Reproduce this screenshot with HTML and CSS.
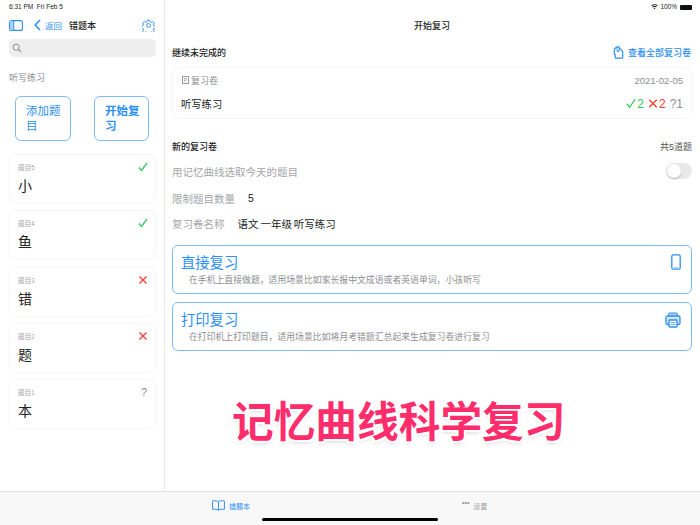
FILE: index.html
```html
<!DOCTYPE html>
<html lang="zh">
<head>
<meta charset="utf-8">
<title>错题本</title>
<link rel="stylesheet" href="styles.css">
</head>
<body>
<div class="app">
  <div class="panes">
    <aside class="sidebar">
      <div class="status status-left">6:31 PM&nbsp;&nbsp;Fri Feb 5</div>
      <div class="sidenav">
        <svg class="ic-side" viewBox="0 0 14 11"><rect x=".6" y=".6" width="12.8" height="9.8" rx="2" fill="none" stroke="#2c90f5" stroke-width="1.1"/><rect x="1" y="1" width="3.6" height="9" fill="#a9d2fb"/><path d="M4.8.8v9.4" stroke="#2c90f5" stroke-width="1"/></svg>
        <svg class="ic-back" viewBox="0 0 7 12"><path d="M6 1 1.2 6 6 11" fill="none" stroke="#2c90f5" stroke-width="1.6"/></svg>
        <span class="back">返回</span>
        <span class="sidetitle">错题本</span>
        <svg class="ic-gear" viewBox="0 0 24 24"><path d="M10 2h4l.7 3 2.5 1.1 2.7-1.6 2.7 2.9-1.7 2.6.9 2.5 3 .7v3.800l-3 .7-.9 2.4 1.600 2.700-2.800 2.700-2.600-1.600-2.500 1-.7 3h-4l-.7-3-2.400-1-2.700 1.600-2.800-2.800 1.600-2.600-1-2.400-3-.8v-3.800l3-.7 1-2.500-1.600-2.700 2.800-2.700 2.600 1.600 2.500-1z" fill="none" stroke="#2c90f5" stroke-width="1.7" stroke-linejoin="round"/><circle cx="12" cy="12" r="3.6" fill="none" stroke="#2c90f5" stroke-width="1.7"/></svg>
      </div>
      <div class="search">
        <svg class="ic-search" viewBox="0 0 12 12"><circle cx="5" cy="5" r="3.7" fill="none" stroke="#8e8e93" stroke-width="1.2"/><path d="m7.8 7.8 3.2 3.2" stroke="#8e8e93" stroke-width="1.3"/></svg>
      </div>
      <div class="side-section">听写练习</div>
      <div class="actions">
        <div class="action">添加题目</div>
        <div class="action action-strong">开始复习</div>
      </div>
      <div class="qcard"><div class="qhead"><span>题目5</span><svg class="mark" viewBox="0 0 10 10"><path d="m1 5.500 2.500 3L9 1" fill="none" stroke="#34c759" stroke-width="1.300"/></svg></div><div class="qword">小</div></div>
      <div class="qcard"><div class="qhead"><span>题目4</span><svg class="mark" viewBox="0 0 10 10"><path d="m1 5.500 2.500 3L9 1" fill="none" stroke="#34c759" stroke-width="1.300"/></svg></div><div class="qword">鱼</div></div>
      <div class="qcard"><div class="qhead"><span>题目3</span><svg class="mark" viewBox="0 0 10 10"><path d="m1.500 1.500 7 7m0-7-7 7" fill="none" stroke="#ff3b30" stroke-width="1.300"/></svg></div><div class="qword">错</div></div>
      <div class="qcard"><div class="qhead"><span>题目2</span><svg class="mark" viewBox="0 0 10 10"><path d="m1.500 1.500 7 7m0-7-7 7" fill="none" stroke="#ff3b30" stroke-width="1.300"/></svg></div><div class="qword">题</div></div>
      <div class="qcard"><div class="qhead"><span>题目1</span><span class="qmark">?</span></div><div class="qword">本</div></div>
    </aside>
    <main class="detail">
      <div class="status status-right">
        <svg class="ic-wifi" viewBox="0 0 12 9"><path d="M6 8.500 4.400 6.700a2.300 2.300 0 0 1 3.200 0zM3.300 5.500 2.200 4.300a5.400 5.400 0 0 1 7.600 0L8.700 5.500a3.900 3.900 0 0 0-5.400 0zM1.300 3.400.3 2.300a8 8 0 0 1 11.400 0l-1 1.100a6.600 6.600 0 0 0-9.400 0z" fill="#111"/></svg>
        <span>100%</span>
        <span class="battery"></span>
      </div>
      <div class="title">开始复习</div>
      <div class="head-row">
        <span class="h2">继续未完成的</span>
        <span class="all">
          <svg class="ic-docs" viewBox="0 0 11 14"><path d="M3.500 1h2.200l1 1.200V3h.6l2.700 3v6a1 1 0 0 1-1 1H3a1 1 0 0 1-1-1V9.500L1 9V3.500z" fill="none" stroke="#2c90f5" stroke-width="1.300" stroke-linejoin="round"/><path d="M4 1v5l1-.6 1 .6V3" fill="none" stroke="#2c90f5"/></svg>
          查看全部复习卷
        </span>
      </div>
      <section class="paper">
        <div class="paper-top">
          <span class="paper-type"><span class="ic-paper">P</span>复习卷</span>
          <span class="date">2021-02-05</span>
        </div>
        <div class="paper-bottom">
          <span class="paper-name">听写练习</span>
          <span class="tally">
            <svg class="ic-tally" viewBox="0 0 12 12"><path d="m1 6.500 3.200 4L11 1" fill="none" stroke="#34c759" stroke-width="1.500"/></svg><b class="good">2</b>
            <svg class="ic-tally gap" viewBox="0 0 12 12"><path d="m1.500 1.500 9 9m0-9-9 9" fill="none" stroke="#ff3b30" stroke-width="1.600"/></svg><b class="bad">2</b>
            <b class="unk gap">?</b><b class="unk">1</b>
          </span>
        </div>
      </section>
      <div class="head-row head-new">
        <span class="h2">新的复习卷</span>
        <span class="count">共5道题</span>
      </div>
      <div class="opt opt-switch">
        <span class="label">用记忆曲线选取今天的题目</span>
        <span class="switch"><span class="knob"></span></span>
      </div>
      <div class="opt opt-limit"><span class="label">限制题目数量</span><span class="value num">5</span></div>
      <div class="opt opt-name"><span class="label">复习卷名称</span><span class="value name">语文 一年级 听写练习</span></div>
      <section class="mode">
        <div class="mode-text">
          <div class="mode-title">直接复习</div>
          <div class="mode-desc">在手机上直接做题，适用场景比如家长报中文成语或者英语单词，小孩听写</div>
        </div>
        <svg class="ic-phone" viewBox="0 0 10 16"><rect x=".8" y=".8" width="8.400" height="14.400" rx="1.500" fill="none" stroke="#2c90f5" stroke-width="1.300"/><path d="M3 13.500h4" stroke="#a9d2fb"/></svg>
      </section>
      <section class="mode mode-print">
        <div class="mode-text">
          <div class="mode-title">打印复习</div>
          <div class="mode-desc">在打印机上打印题目，适用场景比如将月考错题汇总起来生成复习卷进行复习</div>
        </div>
        <svg class="ic-printer" viewBox="0 0 16 16"><path d="M3.500 4V2.200C3.500 1.500 4 1 4.700 1h6.600c.7 0 1.200.5 1.200 1.200V4" fill="#a9d2fb" stroke="#2c90f5"/><path d="M4 12.500H2.500A1.500 1.500 0 0 1 1 11V5.500C1 4.700 1.700 4 2.500 4h11c.8 0 1.500.7 1.500 1.500V11a1.500 1.500 0 0 1-1.500 1.500H12" fill="#cfe6fd" stroke="#2c90f5" stroke-width="1.300"/><rect x="4" y="8" width="8" height="7" rx=".8" fill="#fff" stroke="#2c90f5" stroke-width="1.300"/><path d="M5.500 10.500h5M5.500 12.500h5" stroke="#6bb0f8"/></svg>
      </section>
    </main>
  </div>
  <nav class="tabbar">
    <div class="tab tab-active">
      <svg class="ic-book" viewBox="0 0 13 11"><path d="M6.500 1.800C5.500.9 3.500.6 1 .8A.4.4 0 0 0 .6 1.200v8.100c2.500-.3 4.700 0 5.900.9 1.200-.9 3.400-1.200 5.900-.9V1.200a.4.4 0 0 0-.4-.4c-2.500-.2-4.500.1-5.500 1zM6.500 1.800v8.400" fill="none" stroke="#2c90f5" stroke-width="1"/></svg>
      <span>错题本</span>
    </div>
    <div class="tab tab-more">
      <span class="dots">•••</span>
      <span>设置</span>
    </div>
  </nav>
  <div class="home-bar"></div>
  <div class="promo">记忆曲线科学复习</div>
</div>
</body>
</html>
```
FILE: styles.css
```css
* { box-sizing: border-box; }
html, body { margin: 0; padding: 0; }
body {
  width: 700px;
  height: 525px;
  overflow: hidden;
  background: #fff;
  color: #111;
  font-family: "Liberation Sans", "Noto Sans CJK SC", sans-serif;
}
svg { display: block; flex: none; }
.app { position: relative; width: 700px; height: 525px; display: flex; flex-direction: column; }
.panes { flex: 1; display: flex; min-height: 0; }

.sidebar { width: 165px; flex: none; border-right: 1px solid #e8e8ea; padding: 0 8px 0 9px; overflow: hidden; }
.status { font-size: 6.500px; line-height: 8px; height: 8px; }
.status-left { margin-top: 3px; color: #222; }
.sidenav { display: flex; align-items: center; height: 20px; margin-top: 4px; }
.ic-side { width: 14px; height: 11px; margin-right: 11px; }
.ic-back { width: 7px; height: 12px; margin-right: 4px; }
.back { font-size: 8.500px; color: #2c90f5; width: 20px; }
.sidetitle { font-size: 9px; font-weight: 500; margin-left: 4px; flex: 1; color: #222; }
.ic-gear { width: 13px; height: 13px; margin-right: 1px; }
.search { height: 18px; margin-top: 4px; background: #eeeeef; border-radius: 5px; display: flex; align-items: center; padding-left: 3px; }
.ic-search { width: 10px; height: 10px; }
.side-section { font-size: 9px; line-height: 12px; color: #8e8e93; margin-top: 15px; }
.actions { display: flex; justify-content: space-between; margin: 12px 7px 13px 6px; }
.action {
  width: 56px; height: 45px; padding: 7px 8px 0 10px;
  border: 1px solid #7dbafa; border-radius: 6px;
  font-size: 11.500px; line-height: 15px; color: #2c90f5;
}
.action-strong { font-weight: 700; width: 55px; }
.qcard {
  height: 50px; margin-bottom: 6.250px; padding: 7px 8px 0 8px;
  border: 1px solid #f6f6f7; border-radius: 6px;
}
.qhead { display: flex; justify-content: space-between; align-items: center; height: 10px; font-size: 6.500px; color: #a5a5a9; }
.mark { width: 10px; height: 10px; margin-right: -1px; }
.qmark { font-size: 11px; line-height: 10px; color: #8e8e93; }
.good { color: #34c759; }
.bad { color: #ff3b30; }
.unk { color: #8e8e93; }
.qword { font-size: 14px; line-height: 18px; margin-top: 5px; color: #222; }

.detail { flex: 1; min-width: 0; padding: 0 8px 0 7px; position: relative; }
.status-right { display: flex; justify-content: flex-end; align-items: center; gap: 2px; margin-top: 3px; font-size: 6.500px; color: #222; }
.ic-wifi { width: 7px; height: 6px; }
.battery { width: 12px; height: 5px; background: #111; border-radius: 1px; margin-left: 1px; }
.title { text-align: center; font-size: 9px; line-height: 12px; margin-top: 9px; color: #222; font-weight: 500; }
.head-row { display: flex; justify-content: space-between; align-items: center; height: 14px; margin-top: 13px; }
.h2 { font-size: 9px; font-weight: 500; color: #222; }
.all { display: flex; align-items: center; gap: 4px; font-size: 9px; font-weight: 500; color: #2c90f5; padding-right: 1px; }
.ic-docs { width: 11px; height: 13px; }
.paper { height: 52px; margin-top: 8px; border: 1px solid #f6f6f7; border-radius: 6px; padding: 0 8px; }
.paper-top { display: flex; justify-content: space-between; align-items: center; height: 24px; font-size: 9px; color: #8e8e93; }
.paper-type { display: flex; align-items: center; margin-left: 1px; }
.ic-paper { width: 7px; height: 8px; margin-right: 2px; border: 1px solid #9a9a9e; font-size: 5px; line-height: 6px; text-align: center; }
.date { font-size: 9.500px; }
.paper-bottom { display: flex; justify-content: space-between; align-items: center; height: 23px; }
.paper-name { font-size: 10.300px; color: #222; }
.tally { display: flex; align-items: center; font-size: 12px; }
.ic-tally { width: 10px; height: 11px; margin-right: 1px; }
.tally .gap { margin-left: 4px; }
.tally b { font-weight: 500; }
.head-new { margin-top: 20px; }
.count { font-size: 9px; color: #555; }
.opt { display: flex; align-items: center; height: 16px; font-size: 10.500px; color: #a5a5a9; }
.opt-switch { justify-content: space-between; margin-top: 10px; }
.opt-limit { margin-top: 11px; }
.opt-name { margin-top: 9px; }
.value { color: #222; }
.num { margin-left: 13px; }
.name { margin-left: 13px; word-spacing: -1px; }
.switch { width: 26px; height: 16px; background: #e9e9ea; border-radius: 8px; padding: 1px; }
.knob { display: block; width: 14px; height: 14px; border-radius: 50%; background: #fff; box-shadow: 0 1px 2px rgba(0,0,0,.25); }
.mode {
  display: flex; justify-content: space-between; height: 49px; margin-top: 14px;
  border: 1px solid #7dbafa; border-radius: 6px; padding: 8px 7px 0 8px;
}
.mode-print { margin-top: 8px; }
.mode-text { padding-top: 1px; }
.mode-title { font-size: 14.300px; line-height: 17px; color: #2c90f5; }
.mode-desc { font-size: 8.850px; line-height: 11px; color: #8e8e93; margin: 3px 0 0 8px; }
.ic-phone { width: 10px; height: 16px; margin-right: 3px; }
.ic-printer { width: 16px; height: 16px; margin: 1px 3px 0 0; }

.tabbar { height: 34px; flex: none; display: flex; background: #f8f8f8; border-top: 1px solid #e0e0e2; font-size: 7px; color: #a0a0a4; padding-left: 212px; }
.tab { display: flex; align-items: center; height: 26px; padding-top: 1px; }
.tab-active { gap: 4px; color: #2c90f5; }
.tab-more { margin-left: 212px; gap: 4px; }
.ic-book { width: 13px; height: 11px; }
.dots { font-size: 7px; color: #8e8e93; position: relative; top: -3px; }
.home-bar { position: absolute; left: 262px; bottom: 4px; width: 176px; height: 3px; border-radius: 2px; background: #000; }
.promo {
  position: absolute; left: 232px; top: 395px; width: 340px;
  font-family: "Noto Sans CJK SC", sans-serif;
  font-size: 41.700px; line-height: 48px; font-weight: 700; color: #ff2d6b; white-space: nowrap;
  text-shadow: 2px 0 0 #fff, -2px 0 0 #fff, 0 2px 0 #fff, 0 -2px 0 #fff, 2px 2px 0 #fff, -2px 2px 0 #fff, 2px -2px 0 #fff, -2px -2px 0 #fff, 0 3px 4px rgba(0,0,0,.15);
}
```
